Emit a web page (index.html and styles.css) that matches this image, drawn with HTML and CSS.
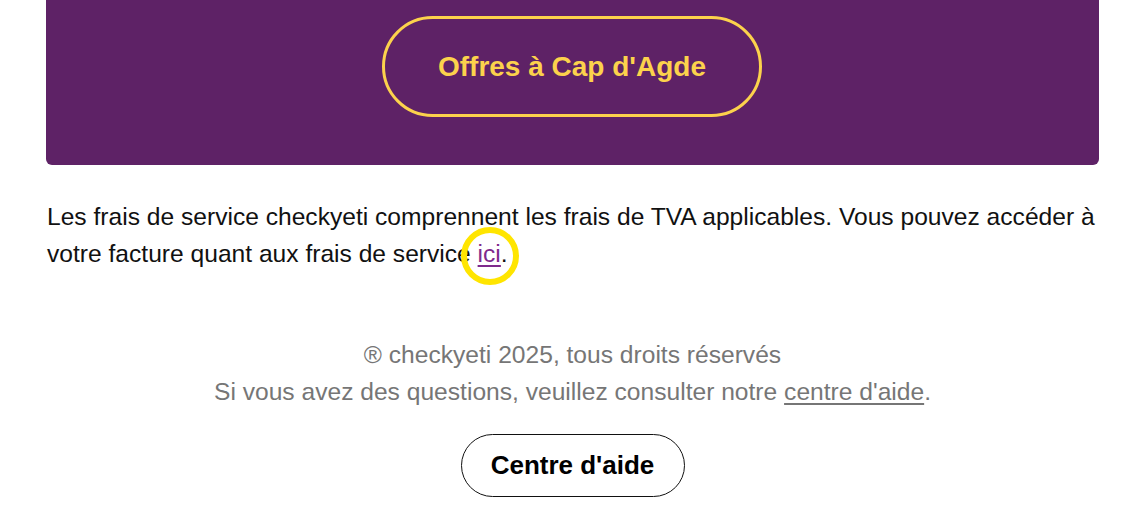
FILE: index.html
```html
<!DOCTYPE html>
<html lang="fr">
<head>
<meta charset="utf-8">
<title>checkyeti</title>
<link rel="stylesheet" href="styles.css">
</head>
<body>
<div class="page">
  <section class="promo">
    <a class="promo-btn" href="#">Offres à Cap d'Agde</a>
  </section>
  <p class="note">Les frais de service checkyeti comprennent les frais de TVA applicables. Vous pouvez accéder à votre facture quant aux frais de service <span class="mark-wrap"><a class="link" href="#">ici</a><span class="mark"></span></span>.</p>
  <footer class="footer">
    <p class="footer-line">® checkyeti 2025, tous droits réservés</p>
    <p class="footer-line">Si vous avez des questions, veuillez consulter notre <a class="footer-link" href="#">centre d'aide</a>.</p>
    <a class="help-btn" href="#">Centre d'aide</a>
  </footer>
</div>
</body>
</html>
```
FILE: styles.css
```css
html, body {
  margin: 0;
  padding: 0;
  background: #ffffff;
}
body {
  font-family: "Liberation Sans", Arial, sans-serif;
}
.page {
  width: 1053px;
  margin: 0 47px 0 46px;
}
.promo {
  background: #5e2266;
  border-radius: 0 0 6px 6px;
  padding: 16px 0 48px;
  display: flex;
  justify-content: center;
}
.promo-btn {
  display: flex;
  align-items: center;
  justify-content: center;
  box-sizing: border-box;
  width: 380px;
  height: 101px;
  border: 3px solid #fcd24c;
  border-radius: 51px;
  color: #fcd24c;
  font-weight: bold;
  font-size: 28px;
  text-decoration: none;
  margin-right: 1px;
}
.note {
  margin: 33px 0 0 1px;
  font-size: 24.6px;
  line-height: 37px;
  color: #111111;
}
.mark-wrap {
  position: relative;
}
.link {
  color: #7f2a8c;
  text-decoration: underline;
  text-underline-offset: 3px;
}
.mark {
  position: absolute;
  left: 50%;
  top: 50%;
  width: 46px;
  height: 46px;
  border: 6px solid #ffe500;
  border-radius: 50%;
  transform: translate(-50%, -50%) translate(1px, 2px);
}
.footer {
  margin-top: 64px;
  display: flex;
  flex-direction: column;
  align-items: center;
  padding-bottom: 21px;
}
.footer-line {
  margin: 0;
  font-size: 24.6px;
  line-height: 37px;
  color: #767676;
}
.footer-link {
  color: #767676;
  text-decoration: underline;
  text-underline-offset: 3px;
}
.help-btn {
  margin-top: 24px;
  box-sizing: border-box;
  width: 224px;
  height: 63px;
  border: 1px solid #111111;
  border-radius: 32px;
  display: flex;
  align-items: center;
  justify-content: center;
  color: #000000;
  font-weight: bold;
  font-size: 26px;
  text-decoration: none;
}
```
